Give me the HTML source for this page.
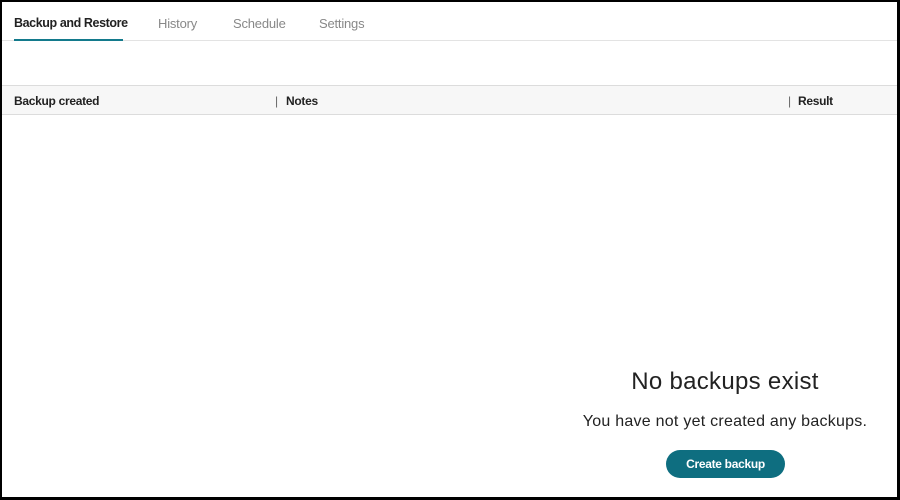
<!DOCTYPE html>
<html><head><style>
*{margin:0;padding:0;box-sizing:border-box}
body{width:900px;height:500px;background:#000;font-family:"Liberation Sans",sans-serif;overflow:hidden}
.f{position:absolute;left:2px;top:2px;width:895px;height:495px;background:#fff}
.t{position:absolute;top:14px;font-size:13px;color:#888;letter-spacing:-0.2px}
.h{position:absolute;top:92px;font-size:12px;font-weight:bold;color:#222;letter-spacing:-0.3px}
</style></head><body>
<div class="f">
<div class="t" style="left:12px;color:#222;font-weight:bold;font-size:12.5px;letter-spacing:-0.4px">Backup and Restore</div>
<div class="t" style="left:156px">History</div>
<div class="t" style="left:231px">Schedule</div>
<div class="t" style="left:317px">Settings</div>
<div style="position:absolute;left:0;top:38px;width:895px;height:1px;background:#e3e3e3"></div>
<div style="position:absolute;left:12px;top:37px;width:109px;height:2px;background:#137a8c"></div>
<div style="position:absolute;left:0;top:83px;width:895px;height:30px;background:#f7f7f7;border-top:1px solid #dcdcdc;border-bottom:1px solid #dcdcdc"></div>
<div class="h" style="left:12px">Backup created</div>
<div class="h" style="left:273px;font-weight:normal;color:#666">|</div>
<div class="h" style="left:284px">Notes</div>
<div class="h" style="left:786px;font-weight:normal;color:#666">|</div>
<div class="h" style="left:796px">Result</div>
<div style="position:absolute;left:573px;width:300px;top:366px;text-align:center;font-size:24px;color:#222;letter-spacing:0.3px">No backups exist</div>
<div style="position:absolute;left:573px;width:300px;top:411px;text-align:center;font-size:16px;color:#222;letter-spacing:0.25px">You have not yet created any backups.</div>
<div style="position:absolute;left:664px;top:448px;width:119px;height:28px;border-radius:14px;background:#0e6e80;color:#fff;font-size:12px;font-weight:bold;text-align:center;line-height:28px;letter-spacing:-0.3px">Create backup</div>
</div>
</body></html>
